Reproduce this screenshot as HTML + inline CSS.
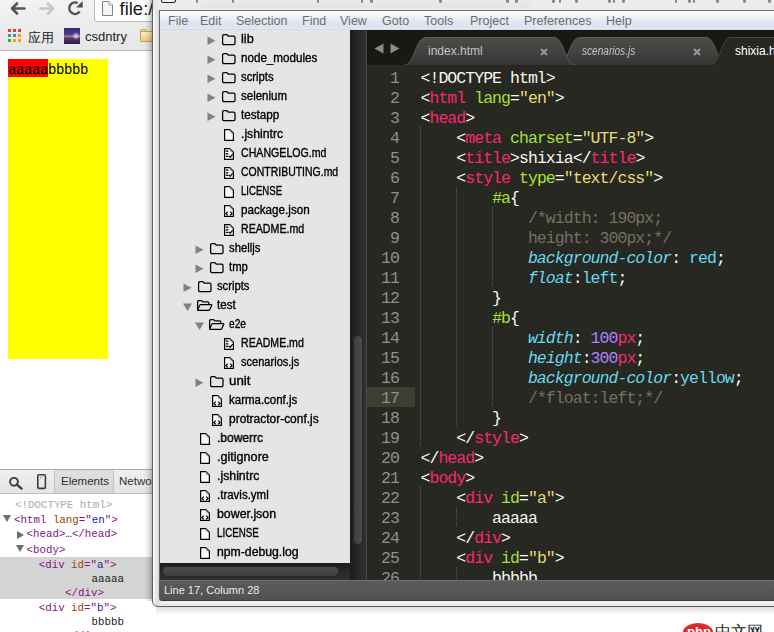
<!DOCTYPE html>
<html><head><meta charset="utf-8">
<style>
*{margin:0;padding:0;box-sizing:border-box}
html,body{width:774px;height:632px;overflow:hidden;background:#fff;position:relative;font-family:"Liberation Sans",sans-serif}
.abs{position:absolute}
svg{position:absolute;overflow:visible}
/* chrome */
#ctool{left:0;top:0;width:160px;height:22px;background:linear-gradient(#f3f3f3,#ececec)}
#cbook{left:0;top:22px;width:160px;height:29px;background:linear-gradient(#ececec,#e7e7e7);border-bottom:1px solid #b8b8b8}
#url{left:94px;top:-5px;width:80px;height:27px;background:#fff;border:1px solid #bdbdbd;border-radius:3px}
#urltxt{left:119.5px;top:-1px;font-size:18.5px;line-height:20px;color:#1a1a1a}
#page{left:0;top:51px;width:160px;height:418px;background:#fff}
#yel{left:8px;top:59px;width:100px;height:300px;background:#ff0}
#red{left:8px;top:59px;width:40px;height:18px;background:#f00}
#pagetxt{left:8px;top:61px;font-family:"Liberation Mono",monospace;font-size:14px;letter-spacing:-0.4px;line-height:18px;color:#000}
#bkt{left:85px;top:29px;font-size:13px;color:#222}
#bkt2{left:28px;top:29px;font-size:13px;color:#222}
/* devtools */
#dtbar{left:0;top:469px;width:160px;height:25px;background:linear-gradient(#efefef,#e4e4e4);border-top:1px solid #a9a9a9;border-bottom:1px solid #c2c2c2}
#dt{left:0;top:494px;width:160px;height:138px;background:#fff}
#dtsel{left:0;top:557px;width:160px;height:42px;background:#d4d4d4}
.dl{position:absolute;font-family:"Liberation Mono",monospace;font-size:10.8px;line-height:14px;white-space:pre;color:#222}
.tg{color:#881280}.an{color:#994500}.av{color:#1a1aa6}
.dtab{position:absolute;top:475px;font-size:11.5px;color:#303030}
/* sublime */
#shadow{left:144px;top:0;width:8px;height:601px;background:linear-gradient(90deg,rgba(0,0,0,0),rgba(0,0,0,.08) 50%,rgba(0,0,0,.25))}
#bshadow{left:156px;top:606px;width:618px;height:9px;background:linear-gradient(rgba(0,0,0,.14),rgba(0,0,0,0))}
#win{left:152px;top:-6px;width:630px;height:613px;background:linear-gradient(90deg,#f8f8f8 0 1px,#ececec 2px,#d9d9d9 6px,#e9e9e9 7px);border:1px solid #5e5e5e;border-radius:0 0 6px 6px}
#title{left:153px;top:0;width:621px;height:10px;background:linear-gradient(90deg,#e2e2e2,#ececec 6px,#ececec)}
#menu{left:159px;top:10px;width:615px;height:20px;background:linear-gradient(#ffffff 0,#fbfcfe 1px,#eef1f8 6px,#e0e6f1 11px,#dde3ef 17px,#eef1f7 18px,#b9c1d1 19px);border-top:1px solid #6b6b6b;border-left:1px solid #6b6b6b}
.mi{position:absolute;top:3px;font-size:12.5px;color:#6d6d6d}
#side{left:160px;top:30px;width:190px;height:533px;background:#e5e5e5}
#vscr{left:350px;top:30px;width:17px;height:550px;background:linear-gradient(90deg,#1c1c1c,#282828 50%,#333 100%)}
#vthumb{left:353px;top:335px;width:10px;height:210px;background:linear-gradient(90deg,#3e3e3e,#4c4c4c);border:1px solid #262626;border-radius:5px}
#hscr{left:160px;top:563px;width:190px;height:17px;background:linear-gradient(#1c1c1c,#2a2a2a 60%,#303030)}
#hthumb{left:162px;top:566px;width:177px;height:11px;background:linear-gradient(#4c4c4c,#3e3e3e);border:1px solid #262626;border-radius:5px}
#tabs{left:367px;top:30px;width:407px;height:36px;background:#181814}
#gline{left:366px;top:30px;width:1px;height:550px;background:#4a4a47}
#code{left:367px;top:65px;width:407px;height:515px;background:#272822;overflow:hidden}
#lhl{left:367px;top:387px;width:48px;height:20px;background:#3e3d32}
#status{left:159px;top:580px;width:615px;height:21px;background:linear-gradient(#5a5a5a,#525252);border-top:1px solid #6e6e6e;border-bottom:1px solid #3e3e3e;border-left:1px solid #5a5a5a;border-radius:0 0 0 3px}
#stxt{left:164px;top:584px;font-size:11px;color:#ebebeb}
.row{position:absolute;font-size:12px;line-height:19px;color:#000;white-space:nowrap;transform-origin:0 0;-webkit-text-stroke:0.35px #000}
#gutter{position:absolute;left:367px;top:69px;width:32px;text-align:right;font-family:"Liberation Mono",monospace;font-size:16.5px;line-height:20px;letter-spacing:-0.9px;color:#8f908a}
#src{position:absolute;left:420.5px;top:69px;font-family:"Liberation Mono",monospace;font-size:16.5px;line-height:20px;letter-spacing:-0.95px;color:#f8f8f2;white-space:pre}
.t{color:#f92672}.a{color:#a6e22e}.s{color:#e6db74}.c{color:#75715e}.p{color:#66d9ef;font-style:italic}.n{color:#ae81ff}.v{color:#66d9ef}
.guide{position:absolute;width:1px;background:repeating-linear-gradient(#5a5a52 0 1px,transparent 1px 2px)}
.tab{position:absolute;top:37px;height:28px}
.tabt{position:absolute;top:44px;font-size:12px;color:#c4c4c4}
.php{position:absolute}
</style></head><body>
<svg width="0" height="0" style="position:absolute">
<defs>
<g id="fold"><path d="M0.6 2 Q0.6 0.6 2 0.6 L4.8 0.6 L6.2 2 L11.6 2 Q13 2 13 3.4 L13 9.2 Q13 10.6 11.6 10.6 L2 10.6 Q0.6 10.6 0.6 9.2 Z" fill="none" stroke="#000" stroke-width="1.25"/></g>
<g id="foldo"><path d="M0.6 9.6 L0.6 1.8 Q0.6 0.6 1.8 0.6 L4.6 0.6 L5.8 1.9 L10.6 1.9 Q11.8 1.9 11.8 3.1 L11.8 4.4" fill="none" stroke="#000" stroke-width="1.25"/><path d="M3.6 4.6 L14.2 4.6 Q15 4.6 14.7 5.4 L12.6 9.8 Q12.3 10.4 11.6 10.4 L1.2 10.4 Q0.4 10.4 0.8 9.6 L2.7 5.4 Q3 4.6 3.6 4.6 Z" fill="none" stroke="#000" stroke-width="1.25"/></g>
<g id="fplain"><path d="M0.6 0.6 L5.8 0.6 L9.4 4.2 L9.4 11.4 L0.6 11.4 Z" fill="#fbfbfb" stroke="#000" stroke-width="1.2" stroke-linejoin="round"/><path d="M5.8 0.6 L5.8 4.2 L9.4 4.2 Z" fill="#c8c8c8" stroke="none"/><path d="M5.9 1.2 L9 4.2" stroke="#000" stroke-width="0.8"/></g>
<g id="fmd"><use href="#fplain"/><path d="M1.8 3.2 H4.4 M1.8 5.8 H4.4 M1.8 8.4 H4.4" stroke="#000" stroke-width="1.2" fill="none"/><path d="M5 8 L6.3 9.4 L8.6 6.2" stroke="#000" stroke-width="1.2" fill="none"/></g>
<g id="fcode"><use href="#fplain"/><path d="M3.8 6.6 L1.9 8.4 L3.8 10.2 M6.2 6.6 L8.1 8.4 L6.2 10.2" stroke="#000" stroke-width="1.2" fill="none"/></g>
</defs></svg>
<!-- chrome -->
<div class="abs" id="ctool"></div>
<div class="abs" id="cbook"></div>
<div class="abs" id="url"></div>
<svg style="left:102px;top:1px" width="12" height="15"><path d="M0.5 0.5 L7 0.5 L10.5 4 L10.5 14.5 L0.5 14.5 Z" fill="#f4f4f4" stroke="#808080" stroke-width="1"/><path d="M7 0.5 L7 4 L10.5 4" fill="#fff" stroke="#9a9a9a" stroke-width="1"/></svg>
<div class="abs" id="urltxt">file:/</div>
<svg style="left:10px;top:2px" width="16" height="13"><path d="M7 1.5 L2 6.5 L7 11.5 M2.5 6.5 L14.5 6.5" fill="none" stroke="#555" stroke-width="2.6" stroke-linecap="round" stroke-linejoin="round"/></svg>
<svg style="left:39px;top:2px" width="16" height="13"><path d="M9 1.5 L14 6.5 L9 11.5 M1.5 6.5 L13.5 6.5" fill="none" stroke="#c6c6c6" stroke-width="2.6" stroke-linecap="round" stroke-linejoin="round"/></svg>
<svg style="left:67px;top:1px" width="17" height="15"><path d="M10.6 2 A5.75 5.75 0 1 0 12.7 10.6" fill="none" stroke="#505050" stroke-width="2.5"/><path d="M9 6.6 L15.7 6.6 L15.7 0 Z" fill="#505050"/></svg>
<!-- apps grid -->
<svg style="left:8px;top:29px" width="13" height="13">
<rect x="0" y="0" width="3" height="3" fill="#e53935"/><rect x="5" y="0" width="3" height="3" fill="#e53935"/><rect x="10" y="0" width="3" height="3" fill="#e53935"/>
<rect x="0" y="5" width="3" height="3" fill="#3aa757"/><rect x="5" y="5" width="3" height="3" fill="#2c8ef8"/><rect x="10" y="5" width="3" height="3" fill="#f4a300"/>
<rect x="0" y="10" width="3" height="3" fill="#3aa757"/><rect x="5" y="10" width="3" height="3" fill="#f4a300"/><rect x="10" y="10" width="3" height="3" fill="#f4a300"/>
</svg>
<div class="abs" id="bkt2">应用</div>
<div class="abs" style="left:64px;top:28px;width:16px;height:16px;background:radial-gradient(circle at 12px 8px,rgba(255,255,240,.9) 0,rgba(255,255,240,.5) 1.5px,rgba(255,255,255,0) 4px),linear-gradient(#2c2a78,#4a3c8c 40%,#b07a90 52%,#5a3a6a 62%,#251a50)"></div>
<div class="abs" id="bkt">csdntry</div>
<div class="abs" style="left:140px;top:29px;width:7px;height:4px;background:#f4dca0;border:1px solid #c8a060;border-radius:2px 2px 0 0"></div><div class="abs" style="left:140px;top:31px;width:14px;height:11px;background:linear-gradient(#fdf0c8,#f2cc78);border:1px solid #c8a060;border-radius:1px"></div>
<div class="abs" id="page"></div>
<div class="abs" id="yel"></div>
<div class="abs" id="red"></div>
<div class="abs" id="pagetxt">aaaaabbbbb</div>
<!-- devtools -->
<div class="abs" id="dtbar"></div>
<svg style="left:9px;top:477px" width="14" height="12"><circle cx="5" cy="4.8" r="3.9" fill="none" stroke="#3c3c3c" stroke-width="1.9"/><path d="M7.8 7.6 L12.6 11.6" stroke="#3c3c3c" stroke-width="2.4" stroke-linecap="round"/></svg>
<svg style="left:37px;top:474px" width="9" height="15"><rect x="0.8" y="0.8" width="7.6" height="13.6" rx="1.2" fill="none" stroke="#3c3c3c" stroke-width="1.6"/><path d="M3 4.5 L6 2" stroke="#999" stroke-width="1"/></svg>
<div class="abs" style="left:54px;top:471px;width:1px;height:22px;background:#c4c4c4"></div>
<div class="abs" style="left:55px;top:470px;width:58px;height:23px;background:linear-gradient(#e0e0e0,#d8d8d8)"></div>
<div class="abs" style="left:113px;top:471px;width:1px;height:22px;background:#c4c4c4"></div>
<div class="dtab" style="left:61px">Elements</div>
<div class="dtab" style="left:119px">Network</div>
<div class="abs" id="dt"></div>
<div class="abs" id="dtsel"></div>
<div class="dl" style="left:15px;top:497.8px;color:#ababab">&lt;!DOCTYPE html&gt;</div>
<svg style="left:3px;top:515px" width="8" height="7"><path d="M0 0 L8 0 L4 7Z" fill="#6e6e6e"/></svg>
<div class="dl" style="left:14px;top:513.3px"><span class=tg>&lt;html</span> <span class=an>lang</span><span class=tg>=</span><span class=tg>"</span><span class=av>en</span><span class=tg>"&gt;</span></div>
<svg style="left:17px;top:531px" width="7" height="8"><path d="M0 0 L7 4 L0 8Z" fill="#6e6e6e"/></svg>
<div class="dl" style="left:26.5px;top:527.3px"><span class=tg>&lt;head&gt;</span>…<span class=tg>&lt;/head&gt;</span></div>
<svg style="left:16px;top:545px" width="8" height="7"><path d="M0 0 L8 0 L4 7Z" fill="#6e6e6e"/></svg>
<div class="dl" style="left:26.5px;top:543px"><span class=tg>&lt;body&gt;</span></div>
<div class="dl" style="left:38.7px;top:557.8px"><span class=tg>&lt;div</span> <span class=an>id</span><span class=tg>="</span><span class=av>a</span><span class=tg>"&gt;</span></div>
<div class="dl" style="left:91.5px;top:571.8px">aaaaa</div>
<div class="dl" style="left:65px;top:585.8px"><span class=tg>&lt;/div&gt;</span></div>
<div class="dl" style="left:38.7px;top:600.8px"><span class=tg>&lt;div</span> <span class=an>id</span><span class=tg>="</span><span class=av>b</span><span class=tg>"&gt;</span></div>
<div class="dl" style="left:91.5px;top:614.8px">bbbbb</div>
<div class="dl" style="left:65px;top:628.8px"><span class=tg>&lt;/div&gt;</span></div>
<!-- sublime -->
<div class="abs" id="shadow"></div>
<div class="abs" id="bshadow"></div>
<div class="abs" id="win"></div>
<div class="abs" id="title"></div>
<div class="abs" style="left:161px;top:-3px;width:15px;height:6px;border:1.5px solid #222;border-radius:2px;background:#f4f4f4"></div>
<div class="abs" style="left:196px;top:0;width:2px;height:3px;background:#3a3a4a;border-radius:0 0 2px 2px;opacity:.55"></div><div class="abs" style="left:232px;top:0;width:2px;height:3px;background:#3a3a4a;border-radius:0 0 2px 2px;opacity:.55"></div><div class="abs" style="left:317px;top:0;width:2px;height:3px;background:#3a3a4a;border-radius:0 0 2px 2px;opacity:.55"></div><div class="abs" style="left:361px;top:0;width:2px;height:3px;background:#3a3a4a;border-radius:0 0 2px 2px;opacity:.55"></div><div class="abs" style="left:370px;top:0;width:3px;height:3px;background:#3a3a4a;border-radius:0 0 2px 2px;opacity:.55"></div><div class="abs" style="left:439px;top:0;width:3px;height:3px;background:#3a3a4a;border-radius:0 0 2px 2px;opacity:.55"></div><div class="abs" style="left:506px;top:0;width:3px;height:3px;background:#3a3a4a;border-radius:0 0 2px 2px;opacity:.55"></div><div class="abs" style="left:515px;top:0;width:3px;height:3px;background:#3a3a4a;border-radius:0 0 2px 2px;opacity:.55"></div><div class="abs" style="left:552px;top:0;width:3px;height:3px;background:#3a3a4a;border-radius:0 0 2px 2px;opacity:.55"></div><div class="abs" style="left:559px;top:0;width:2px;height:3px;background:#3a3a4a;border-radius:0 0 2px 2px;opacity:.55"></div><div class="abs" style="left:575px;top:0;width:3px;height:3px;background:#3a3a4a;border-radius:0 0 2px 2px;opacity:.55"></div><div class="abs" style="left:608px;top:0;width:3px;height:3px;background:#3a3a4a;border-radius:0 0 2px 2px;opacity:.55"></div><div class="abs" style="left:613px;top:0;width:2px;height:3px;background:#3a3a4a;border-radius:0 0 2px 2px;opacity:.55"></div><div class="abs" style="left:622px;top:0;width:3px;height:3px;background:#3a3a4a;border-radius:0 0 2px 2px;opacity:.55"></div><div class="abs" style="left:675px;top:0;width:2px;height:3px;background:#3a3a4a;border-radius:0 0 2px 2px;opacity:.55"></div><div class="abs" style="left:688px;top:0;width:3px;height:3px;background:#3a3a4a;border-radius:0 0 2px 2px;opacity:.55"></div><div class="abs" style="left:693px;top:0;width:2px;height:3px;background:#3a3a4a;border-radius:0 0 2px 2px;opacity:.55"></div><div class="abs" style="left:716px;top:0;width:3px;height:3px;background:#3a3a4a;border-radius:0 0 2px 2px;opacity:.55"></div><div class="abs" style="left:743px;top:0;width:3px;height:3px;background:#3a3a4a;border-radius:0 0 2px 2px;opacity:.55"></div><div class="abs" style="left:768px;top:0;width:3px;height:3px;background:#3a3a4a;border-radius:0 0 2px 2px;opacity:.55"></div><div class="abs" style="left:200px;top:3px;width:330px;height:5px;background:rgba(0,0,0,.035);filter:blur(2px)"></div>
<div class="abs" id="menu">
<span class="mi" style="left:8px">File</span>
<span class="mi" style="left:40px">Edit</span>
<span class="mi" style="left:76px">Selection</span>
<span class="mi" style="left:142px">Find</span>
<span class="mi" style="left:180px">View</span>
<span class="mi" style="left:222px">Goto</span>
<span class="mi" style="left:264px">Tools</span>
<span class="mi" style="left:310px">Project</span>
<span class="mi" style="left:364px">Preferences</span>
<span class="mi" style="left:446px">Help</span>
</div>
<div class="abs" id="side"></div><div class="abs" style="left:159px;top:10px;width:1px;height:575px;background:#686868"></div>
<svg class="ic" style="left:207px;top:36px" width="9" height="10"><path d="M0.5 0.5 L8.5 4.75 L0.5 9Z" fill="#828282"/></svg><svg class="ic" style="left:222px;top:34px" width="15" height="13"><use href="#fold"/></svg><div class="row" style="left:241px;top:30px;transform:scaleX(1.055)">lib</div>
<svg class="ic" style="left:207px;top:55px" width="9" height="10"><path d="M0.5 0.5 L8.5 4.75 L0.5 9Z" fill="#828282"/></svg><svg class="ic" style="left:222px;top:53px" width="15" height="13"><use href="#fold"/></svg><div class="row" style="left:241px;top:49px;transform:scaleX(0.969)">node_modules</div>
<svg class="ic" style="left:207px;top:74px" width="9" height="10"><path d="M0.5 0.5 L8.5 4.75 L0.5 9Z" fill="#828282"/></svg><svg class="ic" style="left:222px;top:72px" width="15" height="13"><use href="#fold"/></svg><div class="row" style="left:241px;top:68px;transform:scaleX(0.941)">scripts</div>
<svg class="ic" style="left:207px;top:93px" width="9" height="10"><path d="M0.5 0.5 L8.5 4.75 L0.5 9Z" fill="#828282"/></svg><svg class="ic" style="left:222px;top:91px" width="15" height="13"><use href="#fold"/></svg><div class="row" style="left:241px;top:87px;transform:scaleX(0.957)">selenium</div>
<svg class="ic" style="left:207px;top:112px" width="9" height="10"><path d="M0.5 0.5 L8.5 4.75 L0.5 9Z" fill="#828282"/></svg><svg class="ic" style="left:222px;top:110px" width="15" height="13"><use href="#fold"/></svg><div class="row" style="left:241px;top:106px;transform:scaleX(0.974)">testapp</div>
<svg class="ic" style="left:224px;top:129px" width="11" height="13"><use href="#fplain"/></svg><div class="row" style="left:241px;top:125px;transform:scaleX(1.018)">.jshintrc</div>
<svg class="ic" style="left:224px;top:148px" width="11" height="13"><use href="#fmd"/></svg><div class="row" style="left:241px;top:144px;transform:scaleX(0.884)">CHANGELOG.md</div>
<svg class="ic" style="left:224px;top:167px" width="11" height="13"><use href="#fmd"/></svg><div class="row" style="left:241px;top:163px;transform:scaleX(0.873)">CONTRIBUTING.md</div>
<svg class="ic" style="left:224px;top:186px" width="11" height="13"><use href="#fplain"/></svg><div class="row" style="left:241px;top:182px;transform:scaleX(0.8)">LICENSE</div>
<svg class="ic" style="left:224px;top:205px" width="11" height="13"><use href="#fcode"/></svg><div class="row" style="left:241px;top:201px;transform:scaleX(0.971)">package.json</div>
<svg class="ic" style="left:224px;top:224px" width="11" height="13"><use href="#fmd"/></svg><div class="row" style="left:241px;top:220px;transform:scaleX(0.886)">README.md</div>
<svg class="ic" style="left:195px;top:245px" width="9" height="10"><path d="M0.5 0.5 L8.5 4.75 L0.5 9Z" fill="#828282"/></svg><svg class="ic" style="left:210px;top:243px" width="15" height="13"><use href="#fold"/></svg><div class="row" style="left:229px;top:239px;transform:scaleX(0.939)">shelljs</div>
<svg class="ic" style="left:195px;top:264px" width="9" height="10"><path d="M0.5 0.5 L8.5 4.75 L0.5 9Z" fill="#828282"/></svg><svg class="ic" style="left:210px;top:262px" width="15" height="13"><use href="#fold"/></svg><div class="row" style="left:229px;top:258px;transform:scaleX(0.94)">tmp</div>
<svg class="ic" style="left:183px;top:283px" width="9" height="10"><path d="M0.5 0.5 L8.5 4.75 L0.5 9Z" fill="#828282"/></svg><svg class="ic" style="left:198px;top:281px" width="15" height="13"><use href="#fold"/></svg><div class="row" style="left:217px;top:277px;transform:scaleX(0.935)">scripts</div>
<svg class="ic" style="left:183px;top:303px" width="10" height="9"><path d="M0 0.5 L9 0.5 L4.5 8Z" fill="#828282"/></svg><svg class="ic" style="left:197px;top:300px" width="17" height="13"><use href="#foldo"/></svg><div class="row" style="left:217px;top:296px;transform:scaleX(0.968)">test</div>
<svg class="ic" style="left:195px;top:322px" width="10" height="9"><path d="M0 0.5 L9 0.5 L4.5 8Z" fill="#828282"/></svg><svg class="ic" style="left:209px;top:319px" width="17" height="13"><use href="#foldo"/></svg><div class="row" style="left:229px;top:315px;transform:scaleX(0.85)">e2e</div>
<svg class="ic" style="left:224px;top:338px" width="11" height="13"><use href="#fmd"/></svg><div class="row" style="left:241px;top:334px;transform:scaleX(0.88)">README.md</div>
<svg class="ic" style="left:224px;top:357px" width="11" height="13"><use href="#fcode"/></svg><div class="row" style="left:241px;top:353px;transform:scaleX(0.921)">scenarios.js</div>
<svg class="ic" style="left:195px;top:378px" width="9" height="10"><path d="M0.5 0.5 L8.5 4.75 L0.5 9Z" fill="#828282"/></svg><svg class="ic" style="left:210px;top:376px" width="15" height="13"><use href="#fold"/></svg><div class="row" style="left:229px;top:372px;transform:scaleX(1.111)">unit</div>
<svg class="ic" style="left:212px;top:395px" width="11" height="13"><use href="#fcode"/></svg><div class="row" style="left:229px;top:391px;transform:scaleX(0.957)">karma.conf.js</div>
<svg class="ic" style="left:212px;top:414px" width="11" height="13"><use href="#fcode"/></svg><div class="row" style="left:229px;top:410px;transform:scaleX(0.996)">protractor-conf.js</div>
<svg class="ic" style="left:200px;top:433px" width="11" height="13"><use href="#fplain"/></svg><div class="row" style="left:217px;top:429px;transform:scaleX(1.0)">.bowerrc</div>
<svg class="ic" style="left:200px;top:452px" width="11" height="13"><use href="#fplain"/></svg><div class="row" style="left:217px;top:448px;transform:scaleX(1.05)">.gitignore</div>
<svg class="ic" style="left:200px;top:471px" width="11" height="13"><use href="#fplain"/></svg><div class="row" style="left:217px;top:467px;transform:scaleX(1.025)">.jshintrc</div>
<svg class="ic" style="left:200px;top:490px" width="11" height="13"><use href="#fcode"/></svg><div class="row" style="left:217px;top:486px;transform:scaleX(0.958)">.travis.yml</div>
<svg class="ic" style="left:200px;top:509px" width="11" height="13"><use href="#fcode"/></svg><div class="row" style="left:217px;top:505px;transform:scaleX(1.029)">bower.json</div>
<svg class="ic" style="left:200px;top:528px" width="11" height="13"><use href="#fplain"/></svg><div class="row" style="left:217px;top:524px;transform:scaleX(0.814)">LICENSE</div>
<svg class="ic" style="left:200px;top:547px" width="11" height="13"><use href="#fplain"/></svg><div class="row" style="left:217px;top:543px;transform:scaleX(1.019)">npm-debug.log</div>
<div class="abs" id="vscr"></div>
<div class="abs" id="vthumb"></div>
<div class="abs" id="hscr"></div>
<div class="abs" id="hthumb"></div>
<div class="abs" id="tabs"></div>
<svg style="left:374px;top:43px" width="10" height="11"><path d="M9.5 0.5 L9.5 10.5 L0.5 5.5Z" fill="#8a8a8a"/></svg>
<svg style="left:390px;top:43px" width="10" height="11"><path d="M0.5 0.5 L0.5 10.5 L9.5 5.5Z" fill="#8a8a8a"/></svg>
<svg style="left:367px;top:30px" width="407" height="36"><defs><linearGradient id="tg1" x1="0" y1="0" x2="0" y2="1"><stop offset="0" stop-color="#4b4b49"/><stop offset="0.6" stop-color="#40403e"/><stop offset="1" stop-color="#333331"/></linearGradient></defs><path d="M191.5 35 C201.5 35 202.5 7.5 212.5 7.5 L339.0 7.5 C349.0 7.5 350.0 35 360.0 35 Z" fill="url(#tg1)"/><path d="M191.5 35 C201.5 35 202.5 7.5 212.5 7.5 L339.0 7.5 C349.0 7.5 350.0 35 360.0 35" fill="none" stroke="#5a5a57" stroke-width="1"/><path d="M37.5 35 C47.5 35 48.5 7.5 58.5 7.5 L187.0 7.5 C197.0 7.5 198.0 35 208.0 35 Z" fill="url(#tg1)"/><path d="M37.5 35 C47.5 35 48.5 7.5 58.5 7.5 L187.0 7.5 C197.0 7.5 198.0 35 208.0 35" fill="none" stroke="#5a5a57" stroke-width="1"/><path d="M343.0 35 C353.0 35 354.0 7.5 364.0 7.5 L532.0 7.5 C542.0 7.5 543.0 35 553.0 35 Z" fill="#272822"/><path d="M343.0 35 C353.0 35 354.0 7.5 364.0 7.5 L532.0 7.5 C542.0 7.5 543.0 35 553.0 35" fill="none" stroke="#46463f" stroke-width="1"/></svg>
<div class="abs" style="left:367px;top:65px;width:407px;height:1px;background:#34342f"></div>
<div class="tabt" style="left:428px">index.html</div>
<div class="tabt" style="left:581.5px;font-style:italic;transform:scaleX(0.84);transform-origin:0 0">scenarios.js</div>
<div class="tabt" style="left:735px;color:#fff">shixia.html</div>
<svg style="left:540px;top:48px" width="8" height="8"><path d="M1 1 L7 7 M7 1 L1 7" stroke="#999" stroke-width="2"/></svg>
<svg style="left:693px;top:48px" width="8" height="8"><path d="M1 1 L7 7 M7 1 L1 7" stroke="#999" stroke-width="2"/></svg>
<div class="abs" id="code"></div>
<div class="abs" id="lhl"></div>
<div class="abs" id="gutter">1<br>2<br>3<br>4<br>5<br>6<br>7<br>8<br>9<br>10<br>11<br>12<br>13<br>14<br>15<br>16<br>17<br>18<br>19<br>20<br>21<br>22<br>23<br>24<br>25<br>26</div>
<pre class="abs" id="src">&lt;!DOCTYPE html&gt;
&lt;<span class=t>html</span> <span class=a>lang</span>=<span class=s>"en"</span>&gt;
&lt;<span class=t>head</span>&gt;
    &lt;<span class=t>meta</span> <span class=a>charset</span>=<span class=s>"UTF-8"</span>&gt;
    &lt;<span class=t>title</span>&gt;shixia&lt;/<span class=t>title</span>&gt;
    &lt;<span class=t>style</span> <span class=a>type</span>=<span class=s>"text/css"</span>&gt;
        <span class=a>#a</span>{
            <span class=c>/*width: 190px;</span>
            <span class=c>height: 300px;*/</span>
            <span class=p>background-color</span>: <span class=v>red</span>;
            <span class=p>float</span>:<span class=v>left</span>;
        }
        <span class=a>#b</span>{
            <span class=p>width</span>: <span class=n>100</span><span class=t>px</span>;
            <span class=p>height</span>:<span class=n>300</span><span class=t>px</span>;
            <span class=p>background-color</span>:<span class=v>yellow</span>;
            <span class=c>/*float:left;*/</span>
        }
    &lt;/<span class=t>style</span>&gt;
&lt;/<span class=t>head</span>&gt;
&lt;<span class=t>body</span>&gt;
    &lt;<span class=t>div</span> <span class=a>id</span>=<span class=s>"a"</span>&gt;
        aaaaa
    &lt;/<span class=t>div</span>&gt;
    &lt;<span class=t>div</span> <span class=a>id</span>=<span class=s>"b"</span>&gt;
        bbbbb</pre>
<div class="guide" style="left:420px;top:127px;height:320px"></div>
<div class="guide" style="left:456px;top:187px;height:240px"></div>
<div class="guide" style="left:492px;top:207px;height:80px"></div>
<div class="guide" style="left:492px;top:327px;height:80px"></div>
<div class="guide" style="left:420px;top:487px;height:93px"></div>
<div class="guide" style="left:456px;top:507px;height:20px"></div>
<div class="guide" style="left:456px;top:567px;height:13px"></div>
<div class="abs" id="gline"></div>
<div class="abs" id="status"></div><div class="abs" style="left:162px;top:602px;width:612px;height:1px;background:#f6f6f6"></div>
<div class="abs" id="stxt">Line 17, Column 28</div>
<!-- php logo -->
<div class="abs" style="left:683px;top:623px;width:30px;height:18px;border-radius:50%;background:#e0282e"></div>
<div class="abs" style="left:687px;top:624px;font-size:13px;color:#fff;font-weight:bold">php</div>
<div class="abs" style="left:715px;top:622px;font-size:16px;color:#222">中文网</div>
</body></html>
